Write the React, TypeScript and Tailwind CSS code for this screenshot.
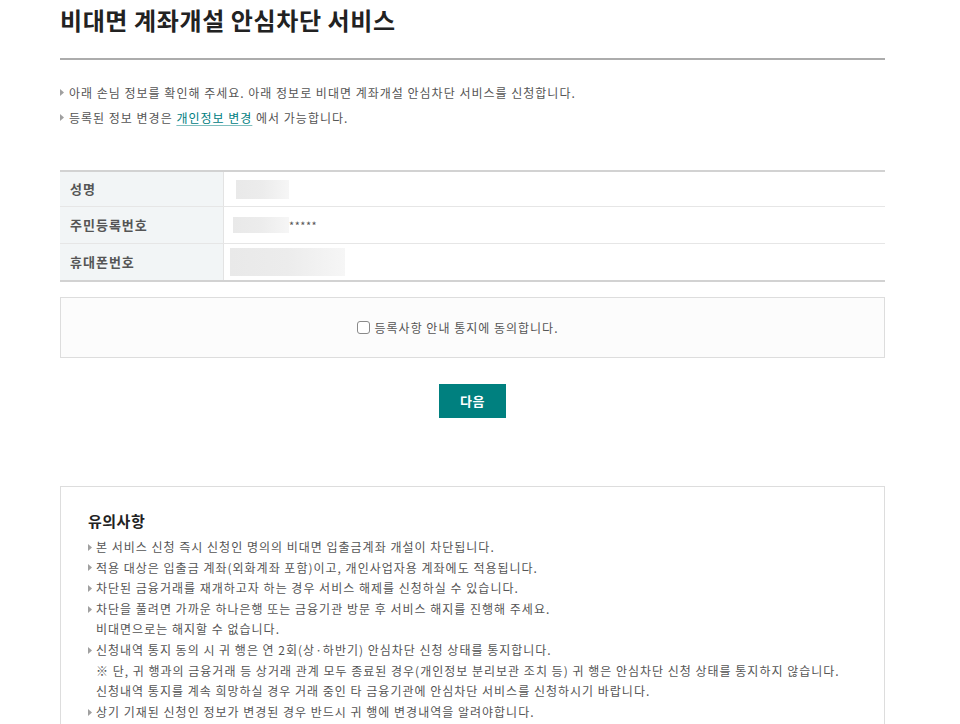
import React from 'react'

const font = { fontFamily: '"Noto Sans CJK KR", "Noto Sans", sans-serif' }

function Tri({ className = '' }: { className?: string }) {
  return (
    <svg width="4" height="7" viewBox="0 0 4 7" className={`shrink-0 ${className}`}>
      <path d="M0 0 L4 3.5 L0 7 Z" fill="#a0a0a0" />
    </svg>
  )
}

function Blur({ w, h, ml = 0 }: { w: number; h: number; ml?: number }) {
  return (
    <div
      className="bg-gradient-to-r from-[#e9e9e9] via-[#ececec] to-[#f6f6f6]"
      style={{ width: w, height: h, marginLeft: ml }}
    />
  )
}

const notices: { text: string; bullet: boolean }[] = [
  { text: '본 서비스 신청 즉시 신청인 명의의 비대면 입출금계좌 개설이 차단됩니다.', bullet: true },
  { text: '적용 대상은 입출금 계좌(외화계좌 포함)이고, 개인사업자용 계좌에도 적용됩니다.', bullet: true },
  { text: '차단된 금융거래를 재개하고자 하는 경우 서비스 해제를 신청하실 수 있습니다.', bullet: true },
  { text: '차단을 풀려면 가까운 하나은행 또는 금융기관 방문 후 서비스 해지를 진행해 주세요.', bullet: true },
  { text: '비대면으로는 해지할 수 없습니다.', bullet: false },
  { text: '신청내역 통지 동의 시 귀 행은 연 2회(상·하반기) 안심차단 신청 상태를 통지합니다.', bullet: true },
  {
    text: '※ 단, 귀 행과의 금융거래 등 상거래 관계 모두 종료된 경우(개인정보 분리보관 조치 등) 귀 행은 안심차단 신청 상태를 통지하지 않습니다.',
    bullet: false,
  },
  { text: '신청내역 통지를 계속 희망하실 경우 거래 중인 타 금융기관에 안심차단 서비스를 신청하시기 바랍니다.', bullet: false },
  { text: '상기 기재된 신청인 정보가 변경된 경우 반드시 귀 행에 변경내역을 알려야합니다.', bullet: true },
]

export default function App() {
  return (
    <div className="min-h-screen bg-white" style={font}>
      <div className="ml-[60px] w-[825px] pb-10">
        {/* title */}
        <div className="h-[60px] border-b-2 border-[#acacac] pt-[4px]">
          <h1 className="text-[24px] font-bold leading-[32px] tracking-[0.6px] text-[#222]">
            비대면 계좌개설 안심차단 서비스
          </h1>
        </div>

        {/* intro */}
        <ul className="pt-[20px] text-[12px] leading-[25px] tracking-[1px] text-[#555]">
          <li className="flex items-center gap-[5px]">
            <Tri />
            <span>아래 손님 정보를 확인해 주세요. 아래 정보로 비대면 계좌개설 안심차단 서비스를 신청합니다.</span>
          </li>
          <li className="flex items-center gap-[5px]">
            <Tri />
            <span>
              등록된 정보 변경은{' '}
              <a className="text-[#00807f] underline decoration-[#7fbfbf] underline-offset-2">개인정보 변경</a> 에서
              가능합니다.
            </span>
          </li>
        </ul>

        {/* info table */}
        <div className="mt-[40px] border-t-2 border-[#d2d2d2] text-[13px] tracking-[1px]">
          <div className="flex h-[35px] border-b border-[#e6e6e6]">
            <div className="flex w-[164px] items-center border-r border-[#e3e3e3] bg-[#f2f5f6] pl-[10px] font-bold text-[#555]">
              성명
            </div>
            <div className="flex items-center">
              <Blur w={53} h={19} ml={12} />
            </div>
          </div>
          <div className="flex h-[37px] border-b border-[#e6e6e6]">
            <div className="flex w-[164px] items-center border-r border-[#e3e3e3] bg-[#f2f5f6] pl-[10px] font-bold text-[#555]">
              주민등록번호
            </div>
            <div className="flex items-center">
              <Blur w={56} h={16} ml={9} />
              <span className="text-[11px] tracking-[0.5px] text-[#555]">*****</span>
            </div>
          </div>
          <div className="flex h-[38px] border-b-2 border-[#d2d2d2]">
            <div className="flex w-[164px] items-center border-r border-[#e3e3e3] bg-[#f2f5f6] pl-[10px] font-bold text-[#555]">
              휴대폰번호
            </div>
            <div className="flex items-center">
              <Blur w={115} h={28} ml={6} />
            </div>
          </div>
        </div>

        {/* agree */}
        <div className="mt-[15px] flex h-[61px] items-center justify-center border border-[#dddddd] bg-[#fcfcfc] pr-[30px]">
          <label className="flex items-center gap-[5px] text-[12px] tracking-[1px] text-[#555]">
            <span className="h-[13px] w-[13px] rounded-[3px] border border-[#8a8a8a] bg-white" />
            <span>등록사항 안내 통지에 동의합니다.</span>
          </label>
        </div>

        {/* next */}
        <div className="mt-[26px] flex justify-center">
          <button className="h-[34px] w-[67px] bg-[#00807f] text-[13px] font-bold tracking-[0.5px] text-white">
            다음
          </button>
        </div>

        {/* notice */}
        <div className="mt-[68px] border border-[#dddddd] px-[27px] pb-[30px] pt-[22px]">
          <h2 className="text-[15px] font-bold leading-[24px] tracking-[0.5px] text-[#222]">유의사항</h2>
          <ul className="mt-[4px] text-[12px] leading-[20.6px] tracking-[1px] text-[#555]">
            {notices.map((n, i) => (
              <li key={i} className="flex items-center gap-[4px]">
                {n.bullet ? <Tri /> : <span className="w-[4px] shrink-0" />}
                <span>{n.text}</span>
              </li>
            ))}
          </ul>
        </div>
      </div>
    </div>
  )
}
